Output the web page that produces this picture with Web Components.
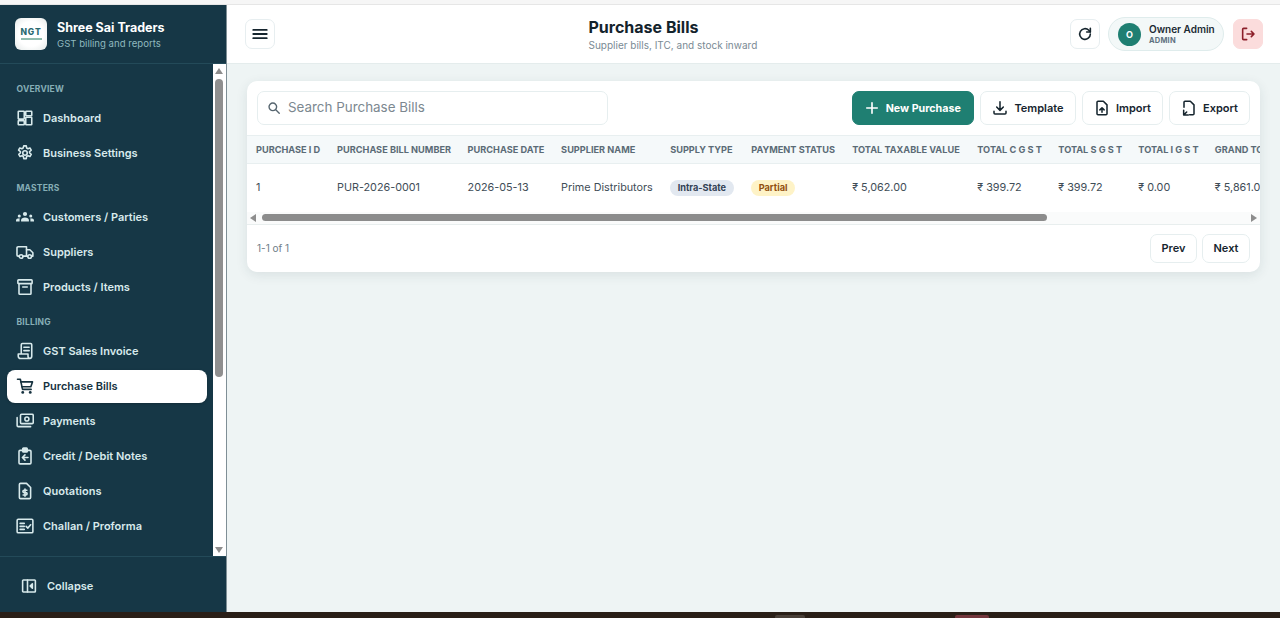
<!DOCTYPE html>
<html><head><meta charset="utf-8">
<style>
html,body{margin:0;padding:0;height:618px;overflow:hidden;background:#eef4f4;font-family:Inter,"Liberation Sans",sans-serif}
</style></head><body>
<app-shell></app-shell>
<script>
const I={
dashboard:'<rect x="3" y="3" width="8" height="10.500" rx=".8"/><rect x="13" y="3" width="8" height="6" rx=".8"/><rect x="3" y="15.500" width="8" height="5.500" rx=".8"/><rect x="13" y="11" width="8" height="10" rx=".8"/>',
settings:'<path d="M10.300 2.500h3.400l.5 2.900 1.700.9 2.700-1 1.700 3-2.200 1.900v1.600l2.200 1.900-1.700 3-2.700-1-1.700.9-.5 2.900h-3.400l-.5-2.900-1.700-.9-2.700 1-1.700-3 2.200-1.900v-1.600L3.400 8.300l1.700-3 2.700 1 1.700-.9z"/><circle cx="12" cy="12" r="3"/>',
people:'<circle cx="12" cy="8" r="2.800" fill="currentColor" stroke="none"/><path d="M6.800 18v-1.800c0-2.400 2.300-3.600 5.200-3.600s5.200 1.200 5.200 3.600V18z" fill="currentColor" stroke="none"/><circle cx="4.300" cy="10.500" r="2" fill="currentColor" stroke="none"/><circle cx="19.700" cy="10.500" r="2" fill="currentColor" stroke="none"/><path d="M0 18v-1.500c0-1.700 1.700-2.700 4.800-2.700V18zM24 18v-1.500c0-1.700-1.700-2.700-4.800-2.700V18z" fill="currentColor" stroke="none"/>',
truck:'<path d="M4 17.500H2.800A1.500 1.500 0 0 1 1.300 16V6.500A1.500 1.500 0 0 1 2.800 5H14v12.500H9.500"/><path d="M14 9h4.500l4 4v4.500H21M14 17.500h1.500"/><circle cx="6.800" cy="18" r="2.400"/><circle cx="18.200" cy="18" r="2.400"/>',
box:'<rect x="2.500" y="2.500" width="19" height="5" rx="1"/><path d="M4 7.500v13a1.200 1.200 0 0 0 1.200 1.200h13.600a1.200 1.200 0 0 0 1.200-1.200v-13M9 12h6"/>',
invoice:'<path d="M7 16V3.500A1.500 1.500 0 0 1 8.500 2h11A1.500 1.500 0 0 1 21 3.500V19a3 3 0 0 1-3 3H6a3 3 0 0 1-3-3v-3h13v3a3 3 0 0 0 3 3"/><path d="M10.500 7h7M10.500 11.500h7"/>',
cart:'<path d="M2 3h3.800l2.900 13.500h11.500"/><path d="M6.300 6.500H22l-2.200 6.500H7.800"/><circle cx="9" cy="20.500" r="1.900" fill="currentColor" stroke="none"/><circle cx="19" cy="20.500" r="1.900" fill="currentColor" stroke="none"/>',
payments:'<rect x="6" y="3" width="17" height="12.500" rx="1.500"/><circle cx="14.500" cy="9.300" r="2.700"/><path d="M1.500 7.500v10.500A1.500 1.500 0 0 0 3 19.500h16.500"/>',
credit:'<path d="M8.500 4.500H5.500A1.500 1.500 0 0 0 4 6v15a1.500 1.500 0 0 0 1.500 1.500h13A1.500 1.500 0 0 0 20 21V6a1.500 1.500 0 0 0-1.500-1.500h-3"/><rect x="9" y="1.500" width="6" height="5" rx="1" fill="currentColor"/><path d="M16 14H8.500m3.500-3.500L8.500 14l3.500 3.500"/>',
quote:'<path d="M6 1.800h8l5.500 5.500V20.700a1.500 1.500 0 0 1-1.500 1.500H6a1.500 1.500 0 0 1-1.500-1.500V3.300A1.500 1.500 0 0 1 6 1.800z"/><path d="M14.500 11h-3.700a1.500 1.500 0 0 0 0 3.200h2.400a1.500 1.500 0 0 1 0 3.200H9.500M12 9.300v9.700"/>',
challan:'<rect x="1.500" y="3" width="21" height="18" rx="1.500"/><path d="M5.500 8.500h5.500M5.500 12.500h5.500M5.500 16.500h5.500M13.500 12.500l2.300 2.300 3.700-4.500"/>',
collapse:'<rect x="3.500" y="4" width="17" height="16" rx="1"/><path d="M10 4v16"/><path d="M16.500 9l-3 3 3 3z" fill="currentColor"/>',
menu:'<path d="M3 6.500h18M3 12h18M3 17.500h18"/>',
refresh:'<path d="M20 12a8 8 0 1 1-2.300-5.600L20 9"/><path d="M20 3.500V9h-5.500"/>',
logout:'<path d="M10 3.500H5.500A1.500 1.500 0 0 0 4 5v14a1.500 1.500 0 0 0 1.500 1.500H10M10.500 12H21M17 8l4 4-4 4"/>',
search:'<circle cx="10" cy="10" r="6.500"/><path d="m15 15 6 6"/>',
plus:'<path d="M12 3v18M3 12h18"/>',
download:'<path d="M12 2.500V15M7 10.500l5 5 5-5M3 17v2.500A1.500 1.500 0 0 0 4.500 21h15a1.500 1.500 0 0 0 1.500-1.500V17"/>',
upload:'<path d="M6 1.800h8l5.500 5.500V20.700a1.500 1.500 0 0 1-1.500 1.500H6a1.500 1.500 0 0 1-1.500-1.500V3.300A1.500 1.500 0 0 1 6 1.800z"/><path d="M12 18.500v-6.500M8.800 14.800 12 11.600l3.200 3.200"/>',
exportf:'<path d="M4.500 11V3.300A1.500 1.500 0 0 1 6 1.800h8l5.500 5.500V20.700a1.500 1.500 0 0 1-1.500 1.500h-5"/><path d="M4 15.500v7h7M4 22.500l4.500-4.500"/>'
};
const svg=(n,s=18,w=2)=>`<svg width="${s}" height="${s}" viewBox="0 0 24 24" fill="none" stroke="currentColor" stroke-width="${w}" stroke-linecap="round" stroke-linejoin="round">${I[n]}</svg>`;
const def=(name,html)=>customElements.define(name,class extends HTMLElement{connectedCallback(){if(this.shadowRoot)return;const r=this.attachShadow({mode:'open'});r.innerHTML=typeof html==='function'?html(this):html;}});

def('nav-item',h=>`<style>:host{display:flex;align-items:center;height:33px;margin:0 6px 0 7px;padding-left:9px;gap:9px;border-radius:8px;font:600 11px Inter,sans-serif;color:#d8eaec}
:host([active]){background:#fff;color:#16323f;box-shadow:0 1px 3px rgba(0,0,0,.2)}svg{display:block;flex:none}</style>${svg(h.getAttribute('icon'),18,2.100)}<slot></slot>`);
def('nav-label',`<style>:host{display:block;height:13px;margin:10px 0 4px;padding-left:16.500px;font:700 8.500px/13px Inter,sans-serif;letter-spacing:.2px;color:#86aeb6}</style><slot></slot>`);
def('v-scroll',`<style>:host{display:flex;flex-direction:column;align-items:center;width:13px;flex:none;background:#fff}
.a{width:0;height:0;border-left:4.500px solid transparent;border-right:4.500px solid transparent}
.u{margin-top:4px;border-bottom:6px solid #8d8d8d}.d{margin-bottom:3px;border-top:6px solid #8d8d8d}
.t{width:7.500px;height:298px;margin-top:5px;border-radius:4px;background:#8f8f8f}.s{flex:1}</style>
<div class="a u"></div><div class="t"></div><div class="s"></div><div class="a d"></div>`);
def('side-bar',`<style>:host{display:flex;flex-direction:column;width:226.500px;flex:none;background:#163746;border-right:1px solid #7f8f96;box-sizing:border-box}
.brand{height:59px;flex:none;box-sizing:border-box;display:flex;align-items:center;gap:10px;padding-left:15px;border-bottom:1px solid #234a59}
.logo{width:32px;height:32px;border-radius:6px;background:radial-gradient(circle,#fff 55%,#e4e9e8);display:flex;flex-direction:column;align-items:center;justify-content:center;flex:none;color:#2a6a72;font:800 8.500px/9px Inter,sans-serif;letter-spacing:.9px}
.logo i{display:block;width:21px;height:1.500px;background:#8fbcae;margin-top:1px}
.n{font:700 12.500px/16px Inter,sans-serif;color:#fff;white-space:nowrap;margin-top:1px}.s{font:400 9.600px/13px Inter,sans-serif;color:#8fb9bf;margin-top:1px;white-space:nowrap}
.mid{flex:1;display:flex;min-height:0}.nav{flex:1;min-width:0;display:flex;flex-direction:column;gap:2px;padding-top:8.500px;box-sizing:border-box;overflow:hidden}
.foot{height:56px;flex:none;box-sizing:border-box;border-top:1px solid #234a59;display:flex;align-items:center;gap:9.500px;padding:2px 0 0 19.500px;font:600 11px Inter,sans-serif;color:#d8eaec}svg{display:block}</style>
<div class="brand"><div class="logo">NGT<i></i></div><div><div class="n">Shree Sai Traders</div><div class="s">GST billing and reports</div></div></div>
<div class="mid"><div class="nav"><slot></slot></div><v-scroll></v-scroll></div>
<div class="foot">${svg('collapse',18,2.100)}<span>Collapse</span></div>`);
def('icon-btn',h=>`<style>:host{display:flex;align-items:center;justify-content:center;width:30px;height:30px;box-sizing:border-box;flex:none;border:1px solid #e7eef0;border-radius:7px;background:#fff;color:#16252e}
:host([danger]){background:#fbdcdc;border-color:#fbdcdc;color:#8c1f2a}svg{display:block}</style>${svg(h.getAttribute('icon'),h.getAttribute('icon')==='menu'?18:16,2.400)}`);
def('user-pill',`<style>:host{display:flex;align-items:center;gap:8px;height:34px;width:116px;box-sizing:border-box;padding-left:9px;border:1px solid #dfecec;border-radius:17px;background:#f3f8f8}
.a{width:23px;height:23px;border-radius:50%;background:#1f7f72;color:#fff;font:700 9px/23px Inter,sans-serif;text-align:center;flex:none}
.n{font:600 10px/12px Inter,sans-serif;color:#1b2a33;white-space:nowrap}.r{font:700 7.500px/10px Inter,sans-serif;color:#5f7280;letter-spacing:.2px;margin-top:1px}</style>
<div class="a">O</div><div><div class="n">Owner Admin</div><div class="r">ADMIN</div></div>`);
def('top-bar',`<style>:host{display:flex;align-items:center;height:59px;flex:none;box-sizing:border-box;background:#fff;border-bottom:1px solid #e4ecec;padding:0 17px 0 18px}
.c{margin-left:314px;flex:1;min-width:0}.t{font:700 16px/20px Inter,sans-serif;color:#13232c;white-space:nowrap}.s{font:400 10px/13px Inter,sans-serif;color:#7a8a94;margin-top:2px;white-space:nowrap}
.r{display:flex;align-items:center;gap:8px}.r icon-btn:last-child{margin-left:1px}</style>
<icon-btn icon="menu"></icon-btn><div class="c"><div class="t">Purchase Bills</div><div class="s">Supplier bills, ITC, and stock inward</div></div>
<div class="r"><icon-btn icon="refresh"></icon-btn><user-pill></user-pill><icon-btn icon="logout" danger></icon-btn></div>`);
def('search-box',`<style>:host{display:flex;align-items:center;gap:7px;width:351px;height:34px;box-sizing:border-box;border:1px solid #e6eeef;border-radius:7px;padding-left:9px;color:#7c8890;font:400 13.400px Inter,sans-serif;background:#fff}svg{display:block;color:#56656f}span{position:relative;top:-1px}</style>${svg('search',14,2.400)}<span><slot></slot></span>`);
def('act-btn',h=>`<style>:host{display:inline-flex;align-items:center;justify-content:center;height:34px;box-sizing:border-box;flex:none;gap:var(--g,6px);border:1px solid #e6eeef;border-radius:7px;background:#fff;color:#16252e;font:600 11px Inter,sans-serif}
:host([primary]){background:#1f7f72;border-color:#1f7f72;color:#fff;font-weight:700;font-size:10.700px}svg{display:block}</style>${svg(h.getAttribute('icon'),h.hasAttribute('primary')?14:16,h.hasAttribute('primary')?2.800:2.300)}<slot></slot>`);
def('page-btn',`<style>:host{display:flex;align-items:center;justify-content:center;height:29px;box-sizing:border-box;border:1px solid #e6eeef;border-radius:7px;background:#fff;color:#16252e;font:600 11px Inter,sans-serif}</style><slot></slot>`);
def('status-pill',h=>`<style>:host{display:inline-block;height:15.500px;padding:0 7.500px;border-radius:8px;font:700 9.200px/15.500px Inter,sans-serif;background:${h.getAttribute('bg')};color:${h.getAttribute('fg')}}</style><slot></slot>`);
def('h-scroll',`<style>:host{display:flex;align-items:center;height:13px;box-sizing:border-box;background:#fafbfb;border-bottom:1px solid #e8eeee}
.a{width:0;height:0;border-top:4.500px solid transparent;border-bottom:4.500px solid transparent}
.l{margin-left:3px;border-right:6px solid #8d8d8d}.r{margin-right:3.500px;border-left:6px solid #8d8d8d}
.t{width:785px;height:7.500px;margin-left:6px;border-radius:4px;background:#8c8c8c}.s{flex:1}</style><div class="a l"></div><div class="t"></div><div class="s"></div><div class="a r"></div>`);
def('data-table',`<style>:host{display:block;overflow:hidden}
table{border-collapse:collapse;table-layout:fixed;width:1100px}
th{height:28px;box-sizing:border-box;padding:0 0 0 8px;background:#f5f9fa;text-align:left;font:700 9.200px Inter,sans-serif;color:#5b6b76;white-space:nowrap;border-top:1px solid #e8eff0;border-bottom:1px solid #e8eff0}
td{height:48px;box-sizing:border-box;padding:0 0 0 8px;font:400 10.800px Inter,sans-serif;color:#3f4d57;white-space:nowrap}
th:first-child,td:first-child{padding-left:9px}</style>
<table><colgroup><col style="width:82px"><col style="width:130.500px"><col style="width:93.500px"><col style="width:109px"><col style="width:81px"><col style="width:101px"><col style="width:125px"><col style="width:81px"><col style="width:80px"><col style="width:76.500px"><col style="width:140px"></colgroup>
<thead><tr><th>PURCHASE I D</th><th>PURCHASE BILL NUMBER</th><th>PURCHASE DATE</th><th>SUPPLIER NAME</th><th>SUPPLY TYPE</th><th>PAYMENT STATUS</th><th>TOTAL TAXABLE VALUE</th><th>TOTAL C G S T</th><th>TOTAL S G S T</th><th>TOTAL I G S T</th><th>GRAND TOTAL</th></tr></thead>
<tbody><tr><td>1</td><td>PUR-2026-0001</td><td>2026-05-13</td><td>Prime Distributors</td><td><status-pill bg="#e2e8f0" fg="#334155">Intra-State</status-pill></td><td><status-pill bg="#fef3c7" fg="#92500f">Partial</status-pill></td><td>₹ 5,062.00</td><td>₹ 399.72</td><td>₹ 399.72</td><td>₹ 0.00</td><td>₹ 5,861.00</td></tr></tbody></table>`);
def('bills-card',`<style>:host{display:block;background:#fff;border-radius:10px;box-shadow:0 3px 12px rgba(30,60,70,.10);overflow:hidden}
.bar{display:flex;align-items:center;height:54px;padding:0 10px;box-sizing:border-box}.sp{flex:1}.acts{display:flex;gap:6px}
.foot{display:flex;align-items:center;height:47px;padding:0 10px;font:400 10px Inter,sans-serif;color:#6f7d87}.pg{display:flex;gap:5px}</style>
<div class="bar"><search-box>Search Purchase Bills</search-box><div class="sp"></div><div class="acts">
<act-btn icon="plus" primary style="width:122.500px;--g:7px">New Purchase</act-btn><act-btn icon="download" style="width:96px">Template</act-btn><act-btn icon="upload" style="width:81px">Import</act-btn><act-btn icon="exportf" style="width:81px">Export</act-btn></div></div>
<data-table></data-table><h-scroll></h-scroll>
<div class="foot"><span>1-1 of 1</span><div class="sp"></div><div class="pg"><page-btn style="width:47px">Prev</page-btn><page-btn style="width:48px">Next</page-btn></div></div>`);
def('app-shell',`<style>:host{display:flex;flex-direction:column;height:618px}
.top{height:5px;flex:none;background:#f6f6f6;border-bottom:1px solid #e6e6e6;box-sizing:border-box}
.mid{flex:1;display:flex;min-height:0}.main{flex:1;min-width:0;display:flex;flex-direction:column;background:#eef4f4}
.content{padding:17px 20px 0 20.500px}
.bot{height:6px;flex:none;background:#2a1f17;display:flex;align-items:flex-end}
.bot i{display:block;height:3px;width:30px;background:#4a4038;border-radius:2px 2px 0 0;margin-left:775px}.bot i+i{margin-left:150px;width:34px;background:#74373d}</style>
<div class="top"></div><div class="mid"><side-bar>
<nav-label>OVERVIEW</nav-label><nav-item icon="dashboard">Dashboard</nav-item><nav-item icon="settings">Business Settings</nav-item>
<nav-label>MASTERS</nav-label><nav-item icon="people">Customers / Parties</nav-item><nav-item icon="truck">Suppliers</nav-item><nav-item icon="box">Products / Items</nav-item>
<nav-label>BILLING</nav-label><nav-item icon="invoice">GST Sales Invoice</nav-item><nav-item icon="cart" active>Purchase Bills</nav-item><nav-item icon="payments">Payments</nav-item><nav-item icon="credit">Credit / Debit Notes</nav-item><nav-item icon="quote">Quotations</nav-item><nav-item icon="challan">Challan / Proforma</nav-item>
</side-bar><div class="main"><top-bar></top-bar><div class="content"><bills-card></bills-card></div></div></div><div class="bot"><i></i><i></i></div>`);
</script></body></html>
